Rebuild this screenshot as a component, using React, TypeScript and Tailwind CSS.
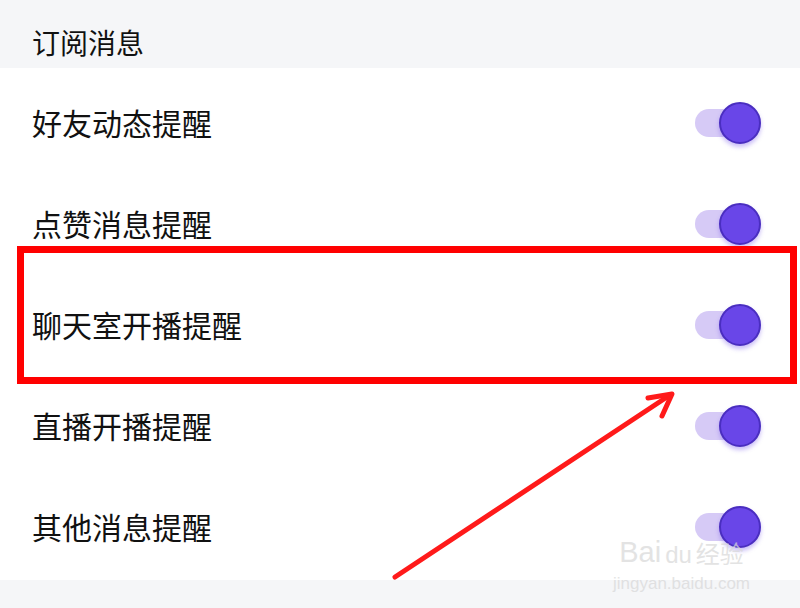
const rows = ["好友动态提醒", "点赞消息提醒", "聊天室开播提醒", "直播开播提醒", "其他消息提醒"];

function Toggle() {
  return (
    <div className="relative w-[66px] h-[44px] flex items-center">
      <div className="absolute left-0 w-[52px] h-[28px] rounded-full bg-[#d6caf6]" />
      <div className="absolute right-0 w-[42px] h-[42px] rounded-full bg-[#6946e8] border-2 border-[#4a2ec0] shadow-[0_3px_4px_rgba(106,72,232,0.35)]" />
    </div>
  );
}

export default function App() {
  return (
    <div
      className="relative w-[800px] h-[608px] overflow-hidden bg-white text-[#111]"
      style={{ fontFamily: '"Noto Sans CJK SC", "Noto Sans", sans-serif' }}
    >
      {/* 标题 */}
      <div className="h-[68px] bg-[#f5f6f8] flex items-center pl-[32px] text-[28px] pt-[16px]">
        订阅消息
      </div>

      {/* 设置列表 */}
      <div className="pt-[4px] pb-[3px]">
        {rows.map((r) => (
          <div key={r} className="h-[101px] flex items-center justify-between pl-[32px] pr-[39px]">
            <span className="text-[30px]">{r}</span>
            <Toggle />
          </div>
        ))}
      </div>
      <div className="h-[40px] bg-[#f5f6f8]" />

      {/* 红框标注 */}
      <div className="absolute left-[17px] top-[246px] w-[780px] h-[138px] border-[7px] border-[#ff0000]" />

      {/* 箭头 */}
      <svg className="absolute left-0 top-0" width="800" height="608" viewBox="0 0 800 608">
        <line x1="395" y1="577" x2="670" y2="395" stroke="#ff1a1a" strokeWidth="5" strokeLinecap="round" />
        <polyline points="648,398 672,394 662,416" fill="none" stroke="#ff1a1a" strokeWidth="5" strokeLinecap="round" strokeLinejoin="round" />
      </svg>

      {/* 水印 */}
      <div
        className="absolute left-[613px] top-[538px] flex flex-col items-center text-[#d8d8d8] opacity-70"
        style={{ fontFamily: '"Liberation Sans", "Noto Sans CJK SC", sans-serif' }}
      >
        <div className="flex items-end gap-[4px] leading-none">
          <span className="text-[29px]">Bai</span>
          <span className="text-[24px]">du</span>
          <span className="text-[24px]">经验</span>
        </div>
        <div className="text-[17px] leading-none mt-[8px]">jingyan.baidu.com</div>
      </div>
    </div>
  );
}
